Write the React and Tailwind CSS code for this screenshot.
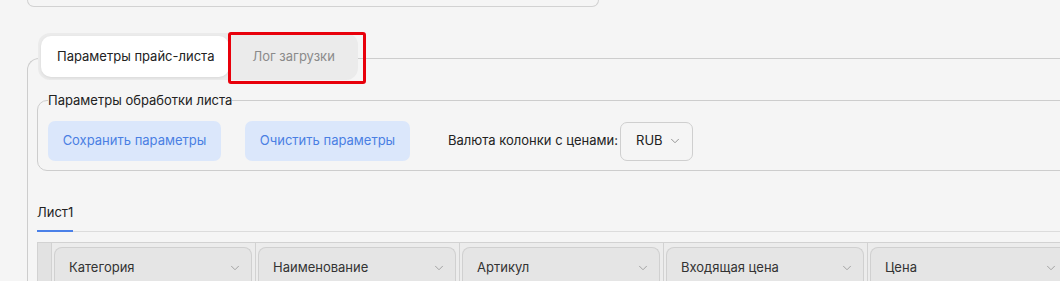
import { ChevronDown } from "lucide-react";

const columns = ["Категория", "Наименование", "Артикул", "Входящая цена", "Цена"];

export default function App() {
  return (
    <div
      className="w-[1060px] h-[281px] overflow-hidden bg-[#f5f5f5] pl-[27px] text-[#222]"
      style={{ fontFamily: "Inter, 'Noto Sans', sans-serif" }}
    >
      {/* bottom of the card above */}
      <div className="w-[572px] h-[7px] border-x border-b border-[#d2d2d2] rounded-b-[12px]" />

      {/* outer panel with tabs */}
      <div className="mt-[51px] w-[1120px] border-t border-l border-[#cdcdcd] rounded-tl-[12px]">
        <div className="relative -mt-[26px] ml-[10px] flex">
          <div className="flex bg-[#ebebeb] rounded-[12px] p-[3px]">
            <button className="h-[41px] pl-[16px] pr-[15px] rounded-[10px] bg-white shadow-[0_1px_3px_rgba(0,0,0,0.08)] text-[13px] text-[#222]">
              Параметры прайс-листа
            </button>
            <button className="h-[41px] pl-[23px] pr-[20px] text-[13px] text-[#8a8a8a]">
              Лог загрузки
            </button>
          </div>
          <div className="absolute left-[190px] -top-px w-[138px] h-[52px] border-[3px] border-[#e8000b] rounded-[3px]" />
        </div>

        <div className="ml-[9px] pt-[12px]">
          <fieldset className="border border-[#cdcdcd] rounded-[10px] pb-[9px] pl-[10px]">
            <legend className="text-[13px] text-[#222] leading-[17px]">Параметры обработки листа</legend>
            <div className="flex items-center pt-[12px]">
              <button className="h-[40px] w-[173px] rounded-[7px] bg-[#dbe7fb] text-[13px] text-[#4a7fe3]">
                Сохранить параметры
              </button>
              <button className="ml-[24px] h-[40px] w-[165px] rounded-[7px] bg-[#dbe7fb] text-[13px] text-[#4a7fe3]">
                Очистить параметры
              </button>
              <span className="ml-[38px] text-[13px] text-[#222]">Валюта колонки с ценами:</span>
              <div className="ml-[2px] h-[39px] w-[73px] rounded-[7px] border border-[#cfcfcf] flex items-center pl-[15px] pr-[10px] justify-between">
                <span className="text-[13px]">RUB</span>
                <ChevronDown size={14} strokeWidth={1.5} className="text-[#888]" />
              </div>
            </div>
          </fieldset>

          {/* sheet tabs */}
          <div className="mt-[31px] border-b border-[#dcdcdc] flex">
            <div className="border-b-2 border-[#4a80e8] -mb-px pb-[8px] text-[13px] leading-[20px]">Лист1</div>
          </div>

          {/* table header */}
          <div className="mt-[10px] flex border-t border-l border-[#d2d2d2] bg-[#ececec]">
            <div className="w-[14px] shrink-0 h-[40px] bg-[#e2e2e2] border-r border-[#d2d2d2]" />
            {columns.map((c) => (
              <div key={c} className="w-[204px] shrink-0 border-r border-[#d2d2d2] pl-[2px] pr-[3px] pt-[4px]">
                <div className="h-[40px] rounded-t-[8px] border border-b-0 border-[#d0d0d0] bg-[#e5e5e5] flex items-center justify-between pl-[14px] pr-[9px]">
                  <span className="text-[13px] text-[#333]">{c}</span>
                  <ChevronDown size={14} strokeWidth={1.5} className="text-[#999]" />
                </div>
              </div>
            ))}
          </div>
        </div>
      </div>
    </div>
  );
}
